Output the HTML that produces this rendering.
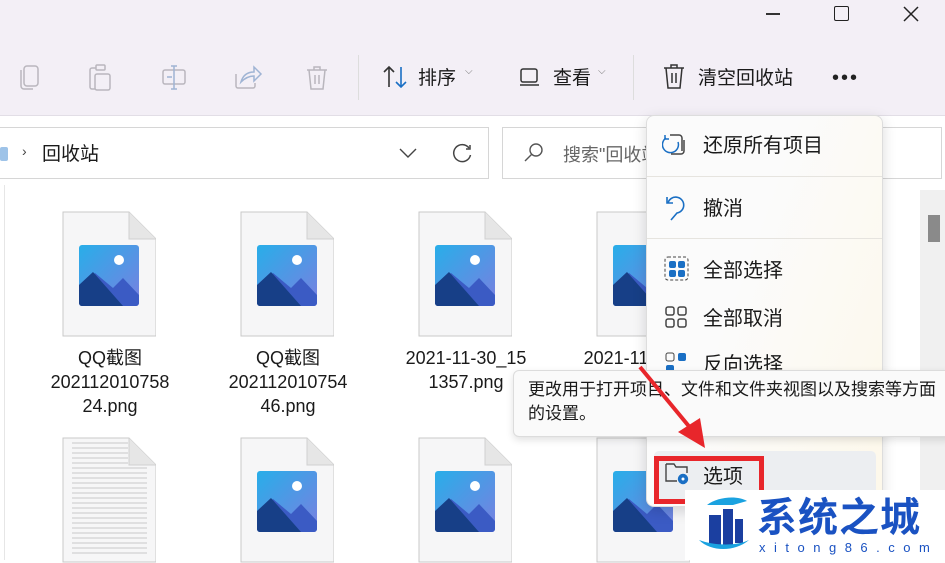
<!DOCTYPE html>
<html><head><meta charset="utf-8"><style>
*{margin:0;padding:0;box-sizing:border-box}
body{width:945px;height:560px;overflow:hidden;position:relative;background:#fff;font-family:"Liberation Sans","Noto Sans CJK SC",sans-serif;color:#1a1a1a}
.abs{position:absolute}
.tb{left:0;top:0;width:945px;height:116px;background:#f3eff6;border-bottom:1px solid #e2dee6}
.lbl{font-size:19px;color:#1a1a1a}
.doc{position:absolute;width:94px;height:126px}
.name{position:absolute;width:170px;text-align:center;font-size:18px;line-height:24px;color:#1a1a1a}
.mi{position:absolute;left:703px;font-size:20px;color:#1a1a1a}
</style></head><body>
<div class="abs tb"></div>
<div class="abs" style="left:766px;top:13px;width:14px;height:1.5px;background:#333"></div>
<div class="abs" style="left:834px;top:6px;width:15px;height:15px;border:1.6px solid #222;border-radius:2px"></div>
<svg class="abs" style="left:903px;top:6px" width="16" height="16"><path d="M1 1L15 15M15 1L1 15" stroke="#222" stroke-width="1.5"/></svg>
<svg class="abs" style="left:18px;top:62px" width="330" height="32" fill="none" stroke="#b9b6bd" stroke-width="1.5">
<rect x="6" y="4" width="14" height="20" rx="3"/><path d="M3 8v16a3 3 0 0 0 3 3h9"/>
<path d="M78 6h-4a2 2 0 0 0-2 2v17a2 2 0 0 0 2 2h3"/><rect x="77" y="12" width="15" height="16" rx="2"/><rect x="78" y="3" width="9" height="5" rx="1"/>
<rect x="145" y="8" width="22" height="14" rx="2"/><path d="M156 4v23M153 4h6M153 27h6M149 15h5" stroke="#9fb4d4"/>
<path d="M218 12v12a2 2 0 0 0 2 2h15a2 2 0 0 0 2-2v-3"/><path d="M223 20c2-7 7-10 13-10v-5l7 7-7 7v-5c-5 0-9 2-13 6z" stroke="#9fb4d4"/>
<path d="M289 8h20M296 8V5h6v3M291 8l2 19h12l2-19M297 13v9M301 13v9"/>
</svg>
<div class="abs" style="left:358px;top:55px;width:1px;height:45px;background:#ddd"></div>
<div class="abs" style="left:633px;top:55px;width:1px;height:45px;background:#ddd"></div>
<svg class="abs" style="left:382px;top:64px" width="28" height="26" fill="none" stroke-width="1.6"><path d="M7 23V3M2 8l5-5 5 5" stroke="#333"/><path d="M19 3v20M14 18l5 5 5-5" stroke="#1a6fc4"/></svg>
<div class="abs lbl" style="left:418px;top:63px">排序</div>
<div class="abs" style="left:465px;top:66px;font-size:10px;color:#777">⌵</div>
<svg class="abs" style="left:519px;top:66px" width="22" height="22" fill="none" stroke="#333" stroke-width="1.5"><rect x="2" y="3" width="16" height="13" rx="2"/><path d="M1 19h19"/></svg>
<div class="abs lbl" style="left:553px;top:63px">查看</div>
<div class="abs" style="left:598px;top:66px;font-size:10px;color:#777">⌵</div>
<svg class="abs" style="left:662px;top:63px" width="26" height="28" fill="none" stroke="#333" stroke-width="1.5"><path d="M2 5h20M9 5V2h6v3M4 5l2 20h12l2-20M10 10v10M14 10v10"/></svg>
<div class="abs lbl" style="left:698px;top:63px">清空回收站</div>
<div class="abs" style="left:832px;top:67px;font-size:20px;letter-spacing:2px;color:#222">•••</div>
<div class="abs" style="left:-2px;top:127px;width:491px;height:52px;border:1px solid #d6d6d6;background:#fff"></div>
<div class="abs" style="left:0;top:147px;width:8px;height:14px;background:#9ec3e8;border-radius:2px"></div>
<div class="abs" style="left:22px;top:143px;font-size:14px;color:#444">›</div>
<div class="abs" style="left:42px;top:139px;font-size:19px">回收站</div>
<svg class="abs" style="left:398px;top:146px" width="20" height="14" fill="none" stroke="#444" stroke-width="1.4"><path d="M2 3l8 8 8-8"/></svg>
<svg class="abs" style="left:451px;top:143px" width="22" height="22" fill="none" stroke="#444" stroke-width="1.5"><path d="M18 5A8.5 8.5 0 1 0 19.5 12"/><path d="M19 2v4h-4"/></svg>
<div class="abs" style="left:502px;top:127px;width:440px;height:52px;border:1px solid #d6d6d6;background:#fff"></div>
<svg class="abs" style="left:523px;top:142px" width="22" height="22" fill="none" stroke="#555" stroke-width="1.4"><circle cx="13" cy="8" r="6"/><path d="M9 12L2 19"/></svg>
<div class="abs" style="left:563px;top:141px;font-size:18px;color:#666">搜索"回收站</div>
<div class="abs" style="left:4px;top:185px;width:1px;height:375px;background:#e6e6e6"></div>
<div class="abs" style="left:920px;top:190px;width:25px;height:370px;background:#f0f0f0"></div>
<div class="abs" style="left:928px;top:215px;width:12px;height:27px;background:#8a8a8a"></div>
<svg width="0" height="0" style="position:absolute"><defs>
<linearGradient id="sky" x1="0" y1="0" x2="1" y2="1"><stop offset="0" stop-color="#28aee9"/><stop offset="1" stop-color="#7a7fe0"/></linearGradient>
<g id="img"><path d="M1 1h66l27 27v97H1z" fill="#f6f6f7" stroke="#c9c9c9"/><path d="M67 1v27h27" fill="#e6e6e6" stroke="#d0d0d0"/>
<rect x="17" y="34" width="60" height="61" rx="3" fill="url(#sky)"/><circle cx="57" cy="49" r="5" fill="#fff"/>
<path d="M17 76l16-14 18 15 10-10 16 17v8a3 3 0 0 1-3 3H20a3 3 0 0 1-3-3z" fill="#3b5bc4"/><path d="M17 74l14-13 30 34H20a3 3 0 0 1-3-3z" fill="#173f87"/></g>
</defs></svg>
<svg class="doc" style="left:62px;top:211px" width="95" height="126"><use href="#img"/></svg>
<svg class="doc" style="left:240px;top:211px" width="95" height="126"><use href="#img"/></svg>
<svg class="doc" style="left:418px;top:211px" width="95" height="126"><use href="#img"/></svg>
<svg class="doc" style="left:596px;top:211px" width="95" height="126"><use href="#img"/></svg>
<svg class="doc" style="left:240px;top:437px" width="95" height="126"><use href="#img"/></svg>
<svg class="doc" style="left:418px;top:437px" width="95" height="126"><use href="#img"/></svg>
<svg class="doc" style="left:596px;top:437px" width="95" height="126"><use href="#img"/></svg>
<svg class="doc" style="left:62px;top:437px" width="95" height="126"><path d="M1 1h66l27 27v97H1z" fill="#f6f6f7" stroke="#c9c9c9"/><path d="M67 1v27h27" fill="#e6e6e6" stroke="#d0d0d0"/>
<g stroke="#c8c8c8"><path d="M10 6h56M10 11h56M10 16h56M10 21h56M10 26h56M10 31h75M10 36h75M10 41h75M10 46h75M10 51h75M10 56h75M10 61h75M10 66h75M10 71h75M10 76h75M10 81h75M10 86h75M10 91h75M10 96h75M10 101h75M10 106h75M10 111h75M10 116h75"/></g></svg>
<div class="name" style="left:25px;top:346px">QQ截图<br>202112010758<br>24.png</div>
<div class="name" style="left:203px;top:346px">QQ截图<br>202112010754<br>46.png</div>
<div class="name" style="left:381px;top:346px">2021-11-30_15<br>1357.png</div>
<div class="name" style="left:559px;top:346px">2021-11-30_15</div>
<div class="abs" style="left:646px;top:115px;width:237px;height:392px;background:linear-gradient(110deg,#fbfbfb 40%,#fdf8ea);border:1px solid #ddd;border-radius:8px;box-shadow:0 4px 14px rgba(0,0,0,.15)"></div>
<div class="abs" style="left:647px;top:176px;width:235px;height:1px;background:#e6e4df"></div>
<div class="abs" style="left:647px;top:238px;width:235px;height:1px;background:#e6e4df"></div>
<div class="abs" style="left:654px;top:451px;width:222px;height:50px;background:#eceef1;border-radius:5px"></div>
<svg class="abs" style="left:662px;top:132px" width="26" height="26" fill="none" stroke-width="1.5"><path d="M8 3h9a3 3 0 0 1 3 3v13" stroke="#444"/><path d="M4 6a8 8 0 1 0 12 4" stroke="#1a6fc4"/><path d="M3 3v4h4" stroke="#1a6fc4"/><path d="M9 22h10a3 3 0 0 0 3-3V8" stroke="#444"/></svg>
<div class="mi" style="top:129px">还原所有项目</div>
<svg class="abs" style="left:664px;top:193px" width="26" height="30" fill="none" stroke="#1a6fc4" stroke-width="1.6"><path d="M3 4v6h6"/><path d="M4 10a8 8 0 1 1 9 10l-6 7"/></svg>
<div class="mi" style="top:192px">撤消</div>
<svg class="abs" style="left:664px;top:256px" width="26" height="26"><rect x="1" y="1" width="23" height="23" rx="3" fill="none" stroke="#444" stroke-dasharray="3 2"/><rect x="5" y="5" width="7" height="7" rx="2" fill="#1a6fc4"/><rect x="14" y="5" width="7" height="7" rx="2" fill="#1a6fc4"/><rect x="5" y="14" width="7" height="7" rx="2" fill="#1a6fc4"/><rect x="14" y="14" width="7" height="7" rx="2" fill="#1a6fc4"/></svg>
<div class="mi" style="top:254px">全部选择</div>
<svg class="abs" style="left:664px;top:305px" width="26" height="26" fill="none" stroke="#444" stroke-width="1.5"><rect x="2" y="2" width="8" height="8" rx="2"/><rect x="14" y="2" width="8" height="8" rx="2"/><rect x="2" y="14" width="8" height="8" rx="2"/><rect x="14" y="14" width="8" height="8" rx="2"/></svg>
<div class="mi" style="top:302px">全部取消</div>
<svg class="abs" style="left:664px;top:351px" width="26" height="20"><rect x="2" y="2" width="8" height="8" rx="2" fill="none" stroke="#444"/><rect x="14" y="2" width="8" height="8" rx="2" fill="#1a6fc4"/><rect x="2" y="14" width="8" height="8" rx="2" fill="#1a6fc4"/></svg>
<div class="mi" style="top:348px">反向选择</div>
<svg class="abs" style="left:664px;top:460px" width="28" height="26" fill="none" stroke="#444" stroke-width="1.4"><path d="M2 4h8l2 3h11v6M2 4v17h11"/><circle cx="19" cy="19" r="4.5" fill="#1a6fc4" stroke="#1a6fc4"/><circle cx="19" cy="19" r="1.5" fill="#fff" stroke="none"/></svg>
<div class="mi" style="top:460px">选项</div>
<div class="abs" style="left:513px;top:370px;width:440px;height:67px;background:#fafafa;border:1px solid #dcdcdc;border-radius:6px;box-shadow:0 3px 8px rgba(0,0,0,.12);font-size:17px;line-height:24px;padding:7px 0 0 14px;white-space:nowrap;overflow:hidden">更改用于打开项目、文件和文件夹视图以及搜索等方面<br>的设置。</div>
<svg class="abs" style="left:630px;top:360px" width="90" height="95"><path d="M10 7L62 70" stroke="#e8262b" stroke-width="4"/><path d="M48 72L75 88L70 58z" fill="#e8262b"/></svg>
<div class="abs" style="left:654px;top:456px;width:110px;height:48px;border:5px solid #e8262b"></div>
<div class="abs" style="left:685px;top:490px;width:260px;height:70px;background:#fff"></div>
<svg class="abs" style="left:697px;top:495px" width="55" height="62"><path d="M10 10c10-8 30-10 40-4l-14 4z" fill="#1aa2e0"/><path d="M12 20h12v30H12zM26 14h10v36H26zM38 24h8v24h-8z" fill="#1b3fa0"/><path d="M2 45c12 12 36 12 50 0-12 6-34 6-50 0z" fill="#1aa2e0"/></svg>
<div class="abs" style="left:757px;top:495px;font-size:40px;font-weight:bold;color:#1a52c2;letter-spacing:1px;line-height:46px">系统之城</div>
<div class="abs" style="left:759px;top:540px;font-size:13px;color:#1a52c2;letter-spacing:8.5px">xitong86.com</div>
</body></html>
